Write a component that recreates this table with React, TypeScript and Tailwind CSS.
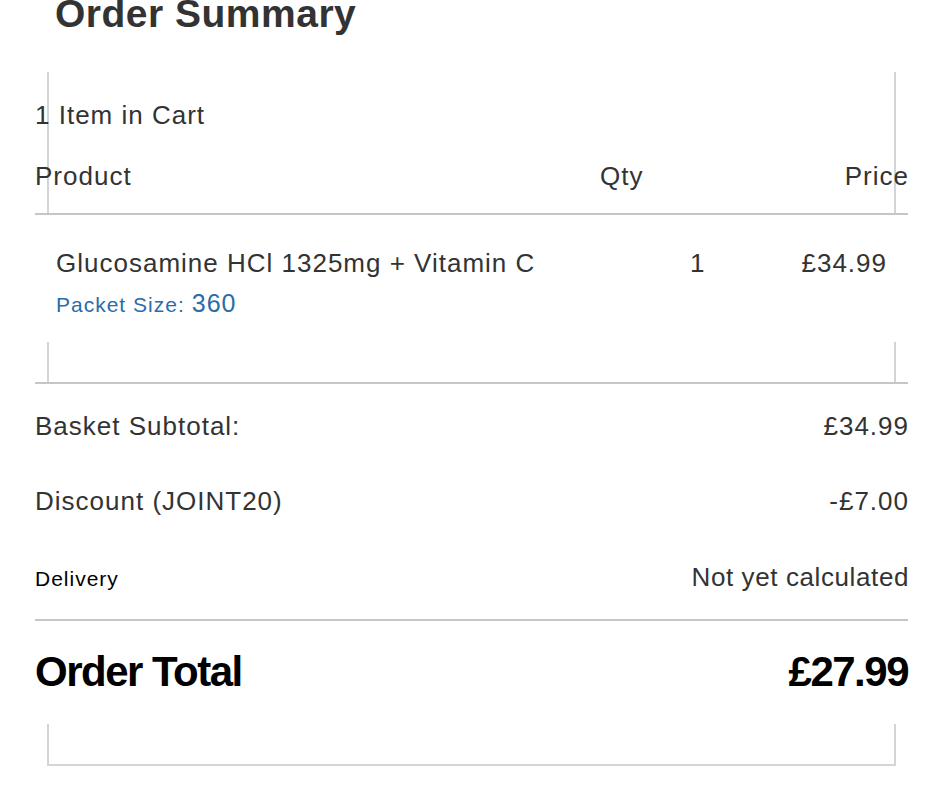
export default function App() {
  return (
    <div className="min-h-[795px] w-[941px] overflow-hidden bg-white font-['Liberation_Sans',Arial,sans-serif] text-[#333]">
      <div className="ml-[35px] w-[873px]">
        <h1 className="-mt-[6px] pl-[20px] text-[39px] leading-[39px] font-bold tracking-[0.5px]">
          Order Summary
        </h1>

        <div className="mx-[12px] mt-[39px] border-x-2 border-[#d4d4d4]">
          <div className="-mx-[14px] pt-[28px] text-[26px] leading-[30px] tracking-[1px]">
            <div>1 Item in Cart</div>
            <div className="mt-[31px] flex border-b-2 border-[#c6c6c6] pb-[22px]">
              <div className="w-[565px]">Product</div>
              <div className="flex-1">Qty</div>
              <div className="-mr-[1px] text-right">Price</div>
            </div>
          </div>
        </div>

        <div className="px-[21px] pt-[33px] pb-[24px] tracking-[1px]">
          <div className="flex h-[30px] text-[26px] leading-[30px]">
            <div className="flex-1">Glucosamine HCl 1325mg + Vitamin C</div>
            <div className="w-[60px]">1</div>
            <div className="w-[137px] text-right">£34.99</div>
          </div>
          <div className="mt-[10px] flex h-[30px] items-baseline gap-[7px] text-[#2a6ca8]">
            <span className="text-[21px] leading-[30px]">Packet Size:</span>
            <span className="text-[25px] leading-[30px]">360</span>
          </div>
        </div>

        <div className="border-b-2 border-[#c6c6c6]">
          <div className="mx-[12px] h-[40px] border-x-2 border-[#d4d4d4]" />
        </div>

        <div className="border-b-2 border-[#c6c6c6] pb-[27px] tracking-[1px]">
          <div className="mt-[27px] flex h-[30px] justify-between text-[26px] leading-[30px]">
            <span>Basket Subtotal:</span>
            <span className="-mr-[1px]">£34.99</span>
          </div>
          <div className="mt-[45px] flex h-[30px] justify-between text-[26px] leading-[30px]">
            <span>Discount (JOINT20)</span>
            <span className="-mr-[1px]">-£7.00</span>
          </div>
          <div className="mt-[46px] flex h-[30px] items-baseline justify-between">
            <span className="text-[21px] leading-[30px] text-black">Delivery</span>
            <span className="-mr-[1px] text-[26px] leading-[30px] tracking-[0.6px]">Not yet calculated</span>
          </div>
        </div>

        <div className="mt-[27px] flex h-[48px] justify-between text-[42px] leading-[48px] font-bold tracking-[-1.5px] text-black">
          <span>Order Total</span>
          <span>£27.99</span>
        </div>

        <div className="mx-[12px] mt-[28px] h-[42px] border-x-2 border-b-2 border-[#d4d4d4]" />
      </div>
    </div>
  );
}
